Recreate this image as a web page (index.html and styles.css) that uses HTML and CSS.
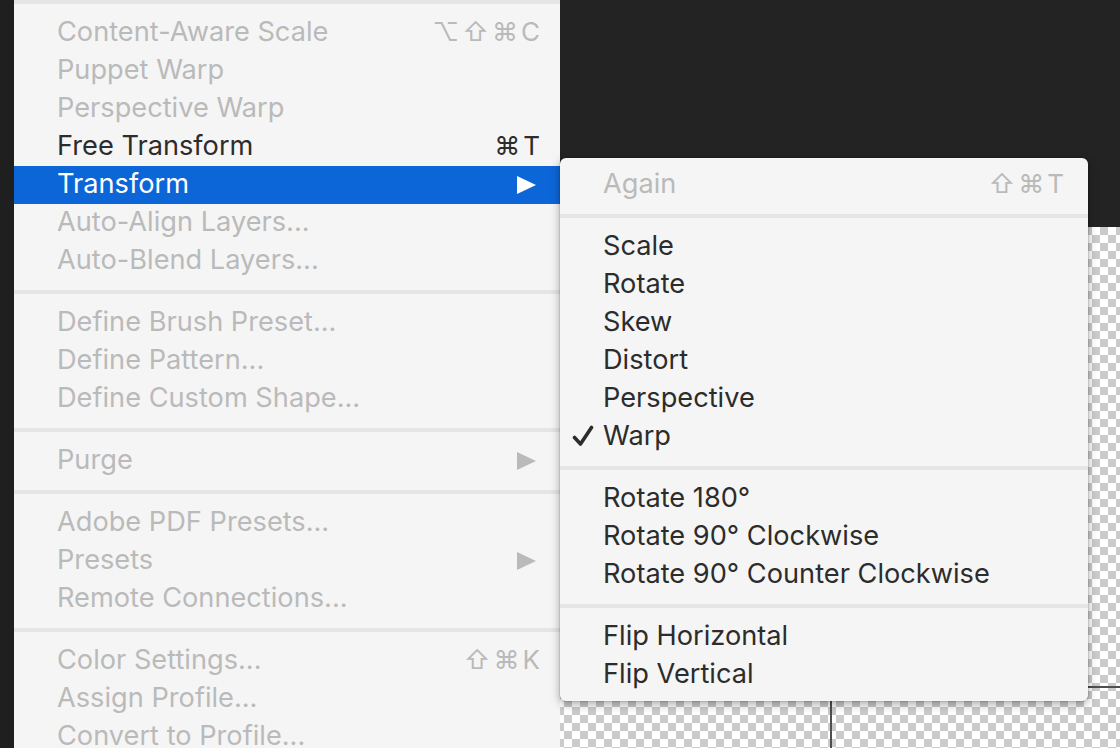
FILE: index.html
```html
<!DOCTYPE html>
<html lang="en">
<head>
<meta charset="utf-8">
<title>Edit menu - Transform</title>
<link rel="stylesheet" href="styles.css">
</head>
<body>
<div class="screen">
  <div class="edge"></div>

  <div class="menu main-menu">
    <div class="sep sep-top"></div>
    <div class="item off"><span class="label">Content-Aware Scale</span><span class="key">⌥⇧⌘C</span></div>
    <div class="item off"><span class="label">Puppet Warp</span></div>
    <div class="item off"><span class="label">Perspective Warp</span></div>
    <div class="item"><span class="label">Free Transform</span><span class="key">⌘T</span></div>
    <div class="item selected"><span class="label">Transform</span>
      <svg class="arrow" viewBox="0 0 19 18" width="19" height="18"><polygon points="0,0 19,9 0,18"/></svg>
    </div>
    <div class="item off"><span class="label">Auto-Align Layers...</span></div>
    <div class="item off"><span class="label">Auto-Blend Layers...</span></div>
    <div class="sep"></div>
    <div class="item off"><span class="label">Define Brush Preset...</span></div>
    <div class="item off"><span class="label">Define Pattern...</span></div>
    <div class="item off"><span class="label">Define Custom Shape...</span></div>
    <div class="sep"></div>
    <div class="item off"><span class="label">Purge</span>
      <svg class="arrow" viewBox="0 0 19 18" width="19" height="18"><polygon points="0,0 19,9 0,18"/></svg>
    </div>
    <div class="sep"></div>
    <div class="item off"><span class="label">Adobe PDF Presets...</span></div>
    <div class="item off"><span class="label">Presets</span>
      <svg class="arrow" viewBox="0 0 19 18" width="19" height="18"><polygon points="0,0 19,9 0,18"/></svg>
    </div>
    <div class="item off"><span class="label">Remote Connections...</span></div>
    <div class="sep"></div>
    <div class="item off"><span class="label">Color Settings...</span><span class="key">⇧⌘K</span></div>
    <div class="item off"><span class="label">Assign Profile...</span></div>
    <div class="item off"><span class="label">Convert to Profile...</span></div>
  </div>

  <div class="workspace">
    <div class="dark-area"></div>
    <div class="canvas">
      <div class="guide guide-v"></div>
      <div class="guide guide-h"></div>
    </div>
  </div>

  <div class="menu sub-menu">
    <div class="item off"><span class="label">Again</span><span class="key">⇧⌘T</span></div>
    <div class="sep"></div>
    <div class="item"><span class="label">Scale</span></div>
    <div class="item"><span class="label">Rotate</span></div>
    <div class="item"><span class="label">Skew</span></div>
    <div class="item"><span class="label">Distort</span></div>
    <div class="item"><span class="label">Perspective</span></div>
    <div class="item checked">
      <svg class="check" viewBox="0 0 22 22" width="22" height="22"><path d="M2.5 12.5 L8.5 19 L19.5 2.5"/></svg>
      <span class="label">Warp</span>
    </div>
    <div class="sep"></div>
    <div class="item"><span class="label">Rotate 180°</span></div>
    <div class="item"><span class="label">Rotate 90° Clockwise</span></div>
    <div class="item"><span class="label">Rotate 90° Counter Clockwise</span></div>
    <div class="sep"></div>
    <div class="item"><span class="label">Flip Horizontal</span></div>
    <div class="item"><span class="label">Flip Vertical</span></div>
  </div>
</div>
</body>
</html>
```

FILE: styles.css
```css
* {
  box-sizing: border-box;
}

html, body {
  margin: 0;
  padding: 0;
  background: #232323;
}

.screen {
  position: relative;
  width: 1120px;
  height: 748px;
  overflow: hidden;
  display: flex;
  font-family: Inter, "Liberation Sans", "DejaVu Sans", sans-serif;
  font-size: 27.2px;
  color: #2c2c2c;
}

.edge {
  width: 14px;
  flex: 0 0 14px;
  background: #1f1f1f;
}

.menu {
  background: #f5f5f5;
  display: flex;
  flex-direction: column;
}

.main-menu {
  width: 546px;
  flex: 0 0 546px;
}

.item {
  position: relative;
  height: 38px;
  flex: 0 0 38px;
  display: flex;
  align-items: center;
  padding: 0 20px 2px 43px;
  line-height: 34px;
  white-space: nowrap;
}

.item .label {
  flex: 1;
}

.item.off {
  color: #bababa;
}

.item.selected {
  background: #0d66d8;
  color: #ffffff;
}

.key {
  font-size: 26px;
  font-family: Inter, "DejaVu Sans", sans-serif;
  letter-spacing: 3px;
  margin-right: -3px;
}

.arrow {
  fill: currentColor;
  margin-right: 4px;
  margin-top: 2px;
}

.sep {
  flex: 0 0 24px;
  height: 24px;
  padding: 10px 0;
}

.sep::before {
  content: "";
  display: block;
  height: 4px;
  background: #e5e5e5;
}

.sep-top {
  margin-top: -10px;
}

.workspace {
  flex: 1;
  display: flex;
  flex-direction: column;
}

.dark-area {
  flex: 0 0 227px;
  background: #232323;
}

.canvas {
  position: relative;
  flex: 1;
  background-color: #ffffff;
  background-image: repeating-conic-gradient(#cbcbcb 0 25%, #ffffff 0 50%);
  background-size: 16px 16px;
  background-position: 4px 0;
}

.guide {
  position: absolute;
  background: #4f4f4f;
}

.guide-v {
  left: 270px;
  top: 0;
  bottom: 0;
  width: 2px;
}

.guide-h {
  left: 0;
  right: 0;
  top: 459px;
  height: 2px;
}

.sub-menu {
  position: absolute;
  left: 560px;
  top: 158px;
  width: 528px;
  padding: 8px 0 7px;
  border-radius: 6px;
  box-shadow: 0 0 0 1px rgba(0, 0, 0, 0.08), 0 3px 10px rgba(0, 0, 0, 0.35);
}

.sub-menu .item {
  padding-right: 24px;
}

.check {
  position: absolute;
  left: 12px;
  top: 7px;
  fill: none;
  stroke: #2c2c2c;
  stroke-width: 3.6;
  stroke-linecap: round;
  stroke-linejoin: round;
}
```
